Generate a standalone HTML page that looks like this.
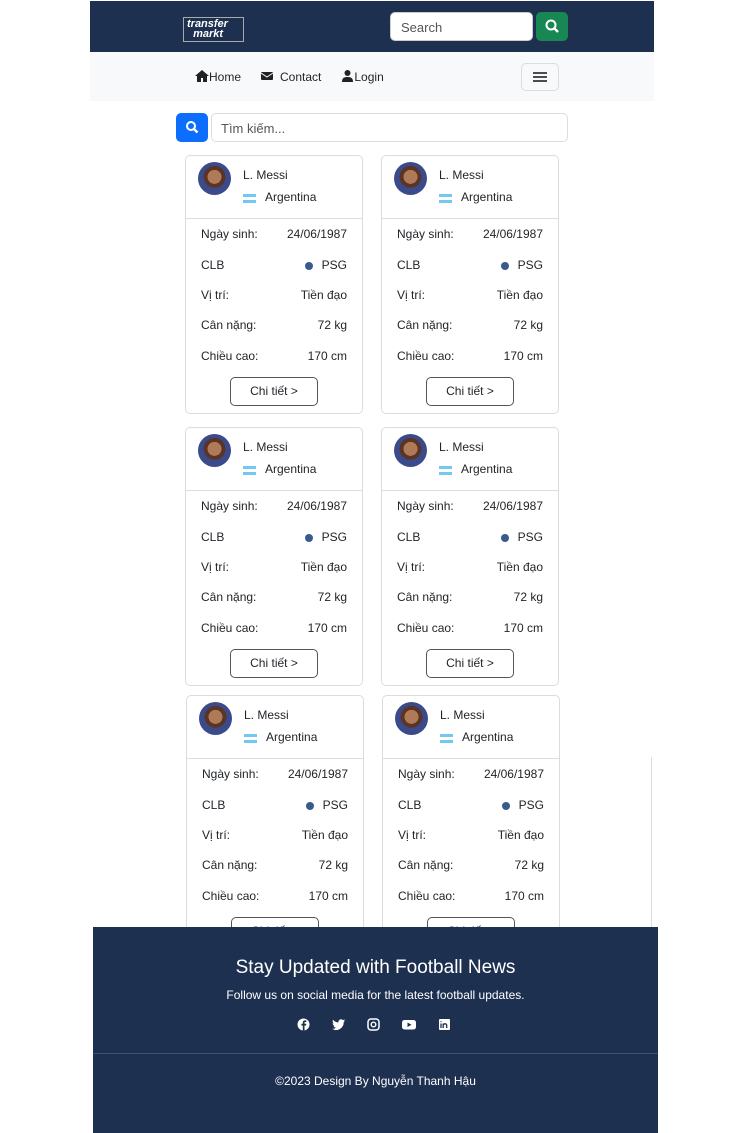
<!DOCTYPE html>
<html><head><meta charset="utf-8"><style>
*{box-sizing:border-box;margin:0;padding:0}
body{width:744px;height:1133px;position:relative;background:#fff;font-family:"Liberation Sans","Noto Sans CJK SC",sans-serif;font-size:12px;color:#212529;overflow:hidden}
.a{position:absolute}
.hdr{left:90px;top:1px;width:564px;height:51px;background:#1d3050}
.nav{left:90px;top:52px;width:564px;height:49px;background:#f8f9fa}
.card{position:absolute;width:178px;height:259px;border:1px solid #dcdcdc;border-radius:5px;background:#fff}
.av{position:absolute;left:12px;top:6px;width:33px;height:33px;border-radius:50%;background:radial-gradient(circle at 50% 45%,#b07a58 0 28%,#5a3424 29% 44%,#3a4a8a 45%)}
.nm{position:absolute;left:57px;top:12px;font-size:12px}
.fl{position:absolute;left:57px;top:38px;width:13px;height:9px;background:linear-gradient(#74c7f0 0 33%,#fff 33% 66%,#74c7f0 66%)}
.ct{position:absolute;left:79px;top:34px}
.dv{position:absolute;left:0;right:0;top:62px;border-top:1px solid #ddd}
.r{position:absolute;left:15px;right:15px;display:flex;justify-content:space-between}
.btn{position:absolute;left:44px;top:221px;width:88px;height:29px;border:1px solid #555;border-radius:5px;text-align:center;line-height:27px}
.dot{display:inline-block;width:8px;height:8px;border-radius:50%;background:#3a5a8a;margin-right:9px;vertical-align:-1px}
.foot{left:93px;top:927px;width:565px;height:206px;background:#1d3050;color:#fff;text-align:center}
</style></head><body>
<div class="a hdr"></div>
<div class="a" style="left:183px;top:17px;width:61px;height:25px;border:1px solid #aaa;background:#1d3050;color:#fff;font:italic bold 11px/10px 'Liberation Sans',sans-serif;padding:1px 0 0 3px">transfer<br>&nbsp;&nbsp;markt</div>
<div class="a" style="left:390px;top:12px;width:143px;height:29px;background:#fff;border:1px solid #ccc;border-radius:5px;color:#555;font-size:13px;padding:7px 10px">Search</div>
<div class="a" style="left:536px;top:12px;width:32px;height:29px;background:#198754;border-radius:5px"><svg width="32" height="29"><circle cx="15" cy="13" r="4.5" fill="none" stroke="#fff" stroke-width="2"/><path d="M18 16l4 4" stroke="#fff" stroke-width="2.4"/></svg></div>
<div class="a nav"></div>
<div class="a" style="left:195px;top:70px;font-size:12px;display:flex;gap:0">
<svg width="14" height="12" viewBox="0 0 14 12"><path d="M7 0L0 6h2v6h4V8h2v4h4V6h2z" fill="#222"/></svg><span>Home</span>
<svg style="margin-left:20px" width="13" height="12" viewBox="0 0 13 12"><rect x="0" y="2" width="12" height="8" rx="1" fill="#222"/><path d="M0 3l6 4 6-4" stroke="#f8f9fa" fill="none"/></svg><span style="margin-left:6px">Contact</span>
<svg style="margin-left:21px" width="11" height="12" viewBox="0 0 11 12"><circle cx="5.5" cy="3" r="3" fill="#222"/><path d="M0 12c0-4 2-5 5.5-5s5.5 1 5.5 5z" fill="#222"/></svg><span style="margin-left:1px">Login</span></div>
<div class="a" style="left:521px;top:63px;width:38px;height:28px;border:1px solid #ddd;border-radius:5px"><svg width="36" height="26"><path d="M11 9h14M11 13h14M11 17h14" stroke="#333" stroke-width="1.8"/></svg></div>
<div class="a" style="left:176px;top:113px;width:32px;height:29px;background:#0d6efd;border-radius:5px"><svg width="32" height="29"><circle cx="15" cy="13" r="4" fill="none" stroke="#fff" stroke-width="2"/><path d="M18 16l3.5 3.5" stroke="#fff" stroke-width="2.4"/></svg></div>
<div class="a" style="left:211px;top:113px;width:357px;height:29px;border:1px solid #ddd;border-radius:5px;color:#555;font-size:13px;padding:7px 9px">Tìm kiếm...</div>

<div class="card" style="left:185px;top:155px"><div class="av"></div><div class="nm">L. Messi</div><div class="fl"></div><div class="ct">Argentina</div><div class="dv"></div>
<div class="r" style="top:71px"><span>Ngày sinh:</span><span>24/06/1987</span></div><div class="r" style="top:102px"><span>CLB</span><span><i class="dot"></i>PSG</span></div><div class="r" style="top:132px"><span>Vị trí:</span><span>Tiền đạo</span></div><div class="r" style="top:162px"><span>Cân nặng:</span><span>72 kg</span></div><div class="r" style="top:193px"><span>Chiều cao:</span><span>170 cm</span></div><div class="btn">Chi tiết &gt;</div></div>
<div class="card" style="left:381px;top:155px"><div class="av"></div><div class="nm">L. Messi</div><div class="fl"></div><div class="ct">Argentina</div><div class="dv"></div>
<div class="r" style="top:71px"><span>Ngày sinh:</span><span>24/06/1987</span></div><div class="r" style="top:102px"><span>CLB</span><span><i class="dot"></i>PSG</span></div><div class="r" style="top:132px"><span>Vị trí:</span><span>Tiền đạo</span></div><div class="r" style="top:162px"><span>Cân nặng:</span><span>72 kg</span></div><div class="r" style="top:193px"><span>Chiều cao:</span><span>170 cm</span></div><div class="btn">Chi tiết &gt;</div></div>
<div class="card" style="left:185px;top:427px"><div class="av"></div><div class="nm">L. Messi</div><div class="fl"></div><div class="ct">Argentina</div><div class="dv"></div>
<div class="r" style="top:71px"><span>Ngày sinh:</span><span>24/06/1987</span></div><div class="r" style="top:102px"><span>CLB</span><span><i class="dot"></i>PSG</span></div><div class="r" style="top:132px"><span>Vị trí:</span><span>Tiền đạo</span></div><div class="r" style="top:162px"><span>Cân nặng:</span><span>72 kg</span></div><div class="r" style="top:193px"><span>Chiều cao:</span><span>170 cm</span></div><div class="btn">Chi tiết &gt;</div></div>
<div class="card" style="left:381px;top:427px"><div class="av"></div><div class="nm">L. Messi</div><div class="fl"></div><div class="ct">Argentina</div><div class="dv"></div>
<div class="r" style="top:71px"><span>Ngày sinh:</span><span>24/06/1987</span></div><div class="r" style="top:102px"><span>CLB</span><span><i class="dot"></i>PSG</span></div><div class="r" style="top:132px"><span>Vị trí:</span><span>Tiền đạo</span></div><div class="r" style="top:162px"><span>Cân nặng:</span><span>72 kg</span></div><div class="r" style="top:193px"><span>Chiều cao:</span><span>170 cm</span></div><div class="btn">Chi tiết &gt;</div></div>
<div class="card" style="left:186px;top:695px"><div class="av"></div><div class="nm">L. Messi</div><div class="fl"></div><div class="ct">Argentina</div><div class="dv"></div>
<div class="r" style="top:71px"><span>Ngày sinh:</span><span>24/06/1987</span></div><div class="r" style="top:102px"><span>CLB</span><span><i class="dot"></i>PSG</span></div><div class="r" style="top:132px"><span>Vị trí:</span><span>Tiền đạo</span></div><div class="r" style="top:162px"><span>Cân nặng:</span><span>72 kg</span></div><div class="r" style="top:193px"><span>Chiều cao:</span><span>170 cm</span></div><div class="btn">Chi tiết &gt;</div></div>
<div class="card" style="left:382px;top:695px"><div class="av"></div><div class="nm">L. Messi</div><div class="fl"></div><div class="ct">Argentina</div><div class="dv"></div>
<div class="r" style="top:71px"><span>Ngày sinh:</span><span>24/06/1987</span></div><div class="r" style="top:102px"><span>CLB</span><span><i class="dot"></i>PSG</span></div><div class="r" style="top:132px"><span>Vị trí:</span><span>Tiền đạo</span></div><div class="r" style="top:162px"><span>Cân nặng:</span><span>72 kg</span></div><div class="r" style="top:193px"><span>Chiều cao:</span><span>170 cm</span></div><div class="btn">Chi tiết &gt;</div></div>
<div class="a" style="left:651px;top:757px;width:1px;height:170px;background:#ddd"></div>

<div class="a foot">
<div style="position:absolute;left:0;right:0;top:30px;font-size:19px">Stay Updated with Football News</div>
<div style="position:absolute;left:0;right:0;top:61px;font-size:12px">Follow us on social media for the latest football updates.</div>
<div style="position:absolute;left:204px;top:91px;display:flex;gap:22px">
<svg width="13" height="13"><circle cx="6.5" cy="6.5" r="6" fill="#fff"/><path d="M7.5 13V7.5h1.6l.2-1.8H7.5V4.8c0-.5.2-.8.8-.8h1V2.4H8c-1.5 0-2.2.9-2.2 2.2v1.1H4.4v1.8h1.4V13" fill="#1d3050"/></svg>
<svg width="13" height="13" viewBox="0 0 13 13"><path d="M13 2.5c-.5.2-1 .4-1.5.4.6-.3 1-.9 1.2-1.5-.5.3-1.1.5-1.7.7a2.7 2.7 0 00-4.6 2.4C4.2 4.4 2.3 3.4 1 1.8c-.7 1.2-.3 2.8.8 3.6-.4 0-.8-.1-1.2-.3 0 1.3.9 2.4 2.1 2.7-.4.1-.8.1-1.2 0 .3 1.1 1.4 1.9 2.5 1.9A5.4 5.4 0 010 10.8 7.6 7.6 0 0011.7 4c.5-.4 1-.9 1.3-1.5z" fill="#fff"/></svg>
<svg width="13" height="13"><rect x="1" y="1" width="11" height="11" rx="3" fill="none" stroke="#fff" stroke-width="1.5"/><circle cx="6.5" cy="6.5" r="2.3" fill="none" stroke="#fff" stroke-width="1.4"/></svg>
<svg width="14" height="13"><rect x="0" y="2" width="14" height="9.5" rx="2.5" fill="#fff"/><path d="M5.5 4.5v4.5l4-2.2z" fill="#1d3050"/></svg>
<svg width="13" height="13"><rect x="1" y="1" width="11" height="11" rx="1" fill="#fff"/><path d="M3 5.5v4.5M3 3.3v.8M5.2 10V5.5M5.2 7.5c0-2 3.5-2.5 3.5 0V10" stroke="#1d3050" stroke-width="1.3" fill="none"/></svg>
</div>
<div style="position:absolute;left:0;right:0;top:126px;border-top:1px solid #3d5272"></div>
<div style="position:absolute;left:0;right:0;top:147px;font-size:12px">©2023 Design By Nguyễn Thanh Hậu</div>
</div>
</body></html>
